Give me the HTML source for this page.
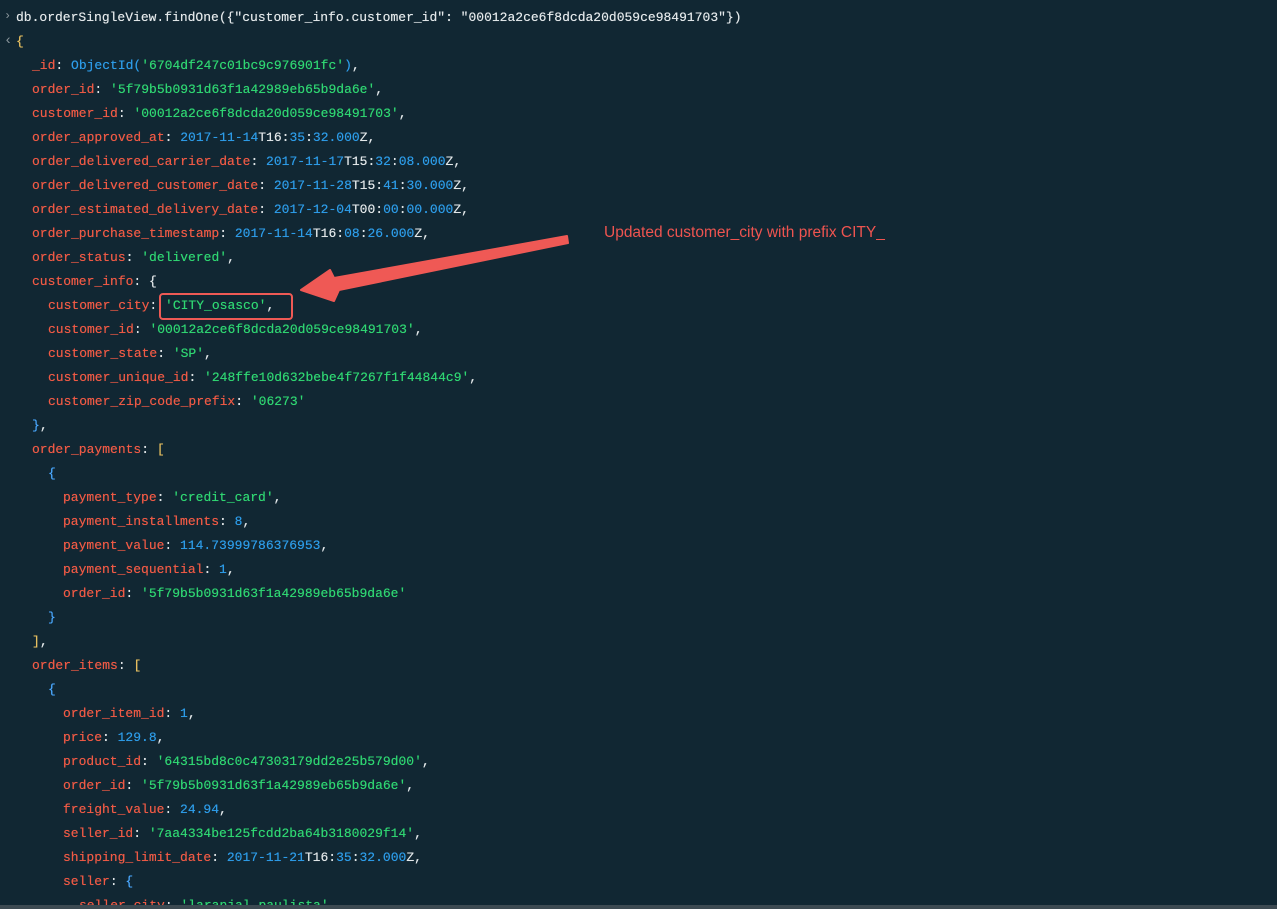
<!DOCTYPE html>
<html><head><meta charset="utf-8"><style>
html,body{margin:0;padding:0;background:#112733;width:1277px;height:909px;overflow:hidden;position:relative}
.l{position:absolute;left:0;white-space:pre;font-family:"Liberation Mono",monospace;font-size:13px;color:#e3e8ea;line-height:16px;text-shadow:0 0 0.4px currentColor}
.k{color:#ef5a45}.s{color:#2fd672}.n{color:#2d9ce8}.y{color:#e8c060}.b{color:#4aa8ff}
.p{position:absolute;left:4px;color:#8a969c;font-family:"Liberation Mono",monospace;font-size:12px}
</style></head><body>
<div class="p" style="top:9px">&#8250;</div>
<div class="p" style="top:33px;font-size:14px">&#8249;</div>
<div class="l" style="top:10px;left:16px">db.orderSingleView.findOne({"customer_info.customer_id": "00012a2ce6f8dcda20d059ce98491703"})</div>
<div class="l" style="top:34px;left:16px"><span class="y">{</span></div>
<div class="l" style="top:58px;left:32px"><span class="k">_id</span>: <span class="n">ObjectId(</span><span class="s">'6704df247c01bc9c976901fc'</span><span class="n">)</span>,</div>
<div class="l" style="top:82px;left:32px"><span class="k">order_id</span>: <span class="s">'5f79b5b0931d63f1a42989eb65b9da6e'</span>,</div>
<div class="l" style="top:106px;left:32px"><span class="k">customer_id</span>: <span class="s">'00012a2ce6f8dcda20d059ce98491703'</span>,</div>
<div class="l" style="top:130px;left:32px"><span class="k">order_approved_at</span>: <span class="n">2017-11-14</span>T16:<span class="n">35</span>:<span class="n">32.000</span>Z,</div>
<div class="l" style="top:154px;left:32px"><span class="k">order_delivered_carrier_date</span>: <span class="n">2017-11-17</span>T15:<span class="n">32</span>:<span class="n">08.000</span>Z,</div>
<div class="l" style="top:178px;left:32px"><span class="k">order_delivered_customer_date</span>: <span class="n">2017-11-28</span>T15:<span class="n">41</span>:<span class="n">30.000</span>Z,</div>
<div class="l" style="top:202px;left:32px"><span class="k">order_estimated_delivery_date</span>: <span class="n">2017-12-04</span>T00:<span class="n">00</span>:<span class="n">00.000</span>Z,</div>
<div class="l" style="top:226px;left:32px"><span class="k">order_purchase_timestamp</span>: <span class="n">2017-11-14</span>T16:<span class="n">08</span>:<span class="n">26.000</span>Z,</div>
<div class="l" style="top:250px;left:32px"><span class="k">order_status</span>: <span class="s">'delivered'</span>,</div>
<div class="l" style="top:274px;left:32px"><span class="k">customer_info</span>: {</div>
<div class="l" style="top:298px;left:48px"><span class="k">customer_city</span>: <span class="s">'CITY_osasco'</span>,</div>
<div class="l" style="top:322px;left:48px"><span class="k">customer_id</span>: <span class="s">'00012a2ce6f8dcda20d059ce98491703'</span>,</div>
<div class="l" style="top:346px;left:48px"><span class="k">customer_state</span>: <span class="s">'SP'</span>,</div>
<div class="l" style="top:370px;left:48px"><span class="k">customer_unique_id</span>: <span class="s">'248ffe10d632bebe4f7267f1f44844c9'</span>,</div>
<div class="l" style="top:394px;left:48px"><span class="k">customer_zip_code_prefix</span>: <span class="s">'06273'</span></div>
<div class="l" style="top:418px;left:32px"><span class="b">}</span>,</div>
<div class="l" style="top:442px;left:32px"><span class="k">order_payments</span>: <span class="y">[</span></div>
<div class="l" style="top:466px;left:48px"><span class="b">{</span></div>
<div class="l" style="top:490px;left:63px"><span class="k">payment_type</span>: <span class="s">'credit_card'</span>,</div>
<div class="l" style="top:514px;left:63px"><span class="k">payment_installments</span>: <span class="n">8</span>,</div>
<div class="l" style="top:538px;left:63px"><span class="k">payment_value</span>: <span class="n">114.73999786376953</span>,</div>
<div class="l" style="top:562px;left:63px"><span class="k">payment_sequential</span>: <span class="n">1</span>,</div>
<div class="l" style="top:586px;left:63px"><span class="k">order_id</span>: <span class="s">'5f79b5b0931d63f1a42989eb65b9da6e'</span></div>
<div class="l" style="top:610px;left:48px"><span class="b">}</span></div>
<div class="l" style="top:634px;left:32px"><span class="y">]</span>,</div>
<div class="l" style="top:658px;left:32px"><span class="k">order_items</span>: <span class="y">[</span></div>
<div class="l" style="top:682px;left:48px"><span class="b">{</span></div>
<div class="l" style="top:706px;left:63px"><span class="k">order_item_id</span>: <span class="n">1</span>,</div>
<div class="l" style="top:730px;left:63px"><span class="k">price</span>: <span class="n">129.8</span>,</div>
<div class="l" style="top:754px;left:63px"><span class="k">product_id</span>: <span class="s">'64315bd8c0c47303179dd2e25b579d00'</span>,</div>
<div class="l" style="top:778px;left:63px"><span class="k">order_id</span>: <span class="s">'5f79b5b0931d63f1a42989eb65b9da6e'</span>,</div>
<div class="l" style="top:802px;left:63px"><span class="k">freight_value</span>: <span class="n">24.94</span>,</div>
<div class="l" style="top:826px;left:63px"><span class="k">seller_id</span>: <span class="s">'7aa4334be125fcdd2ba64b3180029f14'</span>,</div>
<div class="l" style="top:850px;left:63px"><span class="k">shipping_limit_date</span>: <span class="n">2017-11-21</span>T16:<span class="n">35</span>:<span class="n">32.000</span>Z,</div>
<div class="l" style="top:874px;left:63px"><span class="k">seller</span>: <span class="b">{</span></div>
<div class="l" style="top:898px;left:79px"><span class="k">seller_city</span>: <span class="s">'laranjal_paulista'</span></div>
<div style="position:absolute;left:0;top:905px;width:1277px;height:4px;background:#3d4a52"></div>
<div style="position:absolute;left:159px;top:293px;width:130px;height:23px;border:2.5px solid #ee5a55;border-radius:4px"></div>
<svg style="position:absolute;left:0;top:0" width="1277" height="909">
<polygon points="567,236 568,243 339,290 334,301 301,290 330,270 334,278" fill="#ef5955" stroke="#ef5955" stroke-width="2" stroke-linejoin="round"/>
</svg>
<div style="position:absolute;left:604px;top:224px;font-family:'Liberation Sans',sans-serif;font-size:15.5px;color:#ef5450;white-space:nowrap">Updated customer_city with prefix CITY_</div>
</body></html>
